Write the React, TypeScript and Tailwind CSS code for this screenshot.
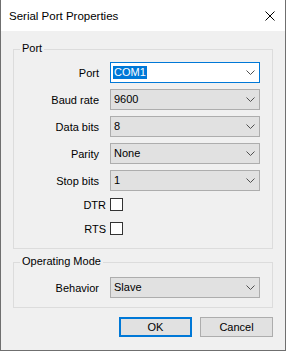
import React from "react";

const font = { fontFamily: '"Liberation Sans", Arial, sans-serif' };

function Chevron() {
  return (
    <svg width="9" height="5" viewBox="0 0 9 5" className="shrink-0">
      <path d="M0.5 0.5 L4.5 4.5 L8.5 0.5" fill="none" stroke="#505050" strokeWidth="1" />
    </svg>
  );
}

function Combo({ value, focused }: { value: string; focused?: boolean }) {
  return (
    <div
      className={
        focused
          ? "flex h-[21px] w-[150px] items-center justify-between border border-[#0078d7] bg-white pl-[2px] pr-[4px]"
          : "flex h-[21px] w-[150px] items-center justify-between border border-[#adadad] bg-[#e1e1e1] pl-[3px] pr-[4px]"
      }
    >
      {focused ? (
        <span className="bg-[#0078d7] px-[1px] leading-[13px] text-white">{value}</span>
      ) : (
        <span className="leading-[13px] text-black">{value}</span>
      )}
      <Chevron />
    </div>
  );
}

function Row({ label, children }: { label: string; children: React.ReactNode }) {
  return (
    <div className="flex items-center">
      <div className="w-[86px] pr-[1px] text-right leading-[14px]">{label}</div>
      <div className="ml-[10px]">{children}</div>
    </div>
  );
}

function Check({ label, className }: { label: string; className: string }) {
  return (
    <div className={"flex h-[13px] items-center " + className}>
      <div className="w-[92px] text-right leading-[14px]">{label}</div>
      <div className="ml-[4px] h-[13px] w-[13px] border border-[#333333] bg-white" />
    </div>
  );
}

export default function App() {
  return (
    <div
      style={font}
      className="flex h-[351px] w-[286px] flex-col border-x border-b border-[#6f6f6f] bg-[#f0f0f0] text-[11px] text-black"
    >
      {/* title bar */}
      <div className="flex h-[31px] shrink-0 items-center justify-between bg-white pl-[8px] pr-[10px]">
        <span className="text-[11.5px] leading-[16px]">Serial Port Properties</span>
        <svg width="10" height="10" viewBox="0 0 10 10">
          <path d="M0.5 0.5 L9.5 9.5 M9.5 0.5 L0.5 9.5" stroke="#000" strokeWidth="1" />
        </svg>
      </div>

      {/* Port group */}
      <div className="relative mx-[12px] mt-[18px] border border-[#dcdcdc] pb-[13px] pt-[12px]">
        <span className="absolute left-[6px] top-[-9px] bg-[#f0f0f0] px-[2px] leading-[14px]">Port</span>
        <div className="flex flex-col gap-[6px]">
          <Row label="Port">
            <Combo value="COM1" focused />
          </Row>
          <Row label="Baud rate">
            <Combo value="9600" />
          </Row>
          <Row label="Data bits">
            <Combo value="8" />
          </Row>
          <Row label="Parity">
            <Combo value="None" />
          </Row>
          <Row label="Stop bits">
            <Combo value="1" />
          </Row>
        </div>
        <Check label="DTR" className="mt-[7px]" />
        <Check label="RTS" className="mt-[11px]" />
      </div>

      {/* Operating mode group */}
      <div className="relative mx-[12px] mt-[13px] border border-[#dcdcdc] pb-[9px] pt-[14px]">
        <span className="absolute left-[6px] top-[-9px] bg-[#f0f0f0] px-[2px] leading-[14px]">Operating Mode</span>
        <Row label="Behavior">
          <Combo value="Slave" />
        </Row>
      </div>

      {/* buttons */}
      <div className="mt-[9px] flex justify-end gap-[8px] px-[12px]">
        <button className="h-[20px] w-[73px] border-2 border-[#0078d7] bg-[#e1e1e1] leading-[14px]">OK</button>
        <button className="h-[20px] w-[73px] border border-[#adadad] bg-[#e1e1e1] leading-[14px]">Cancel</button>
      </div>
    </div>
  );
}
